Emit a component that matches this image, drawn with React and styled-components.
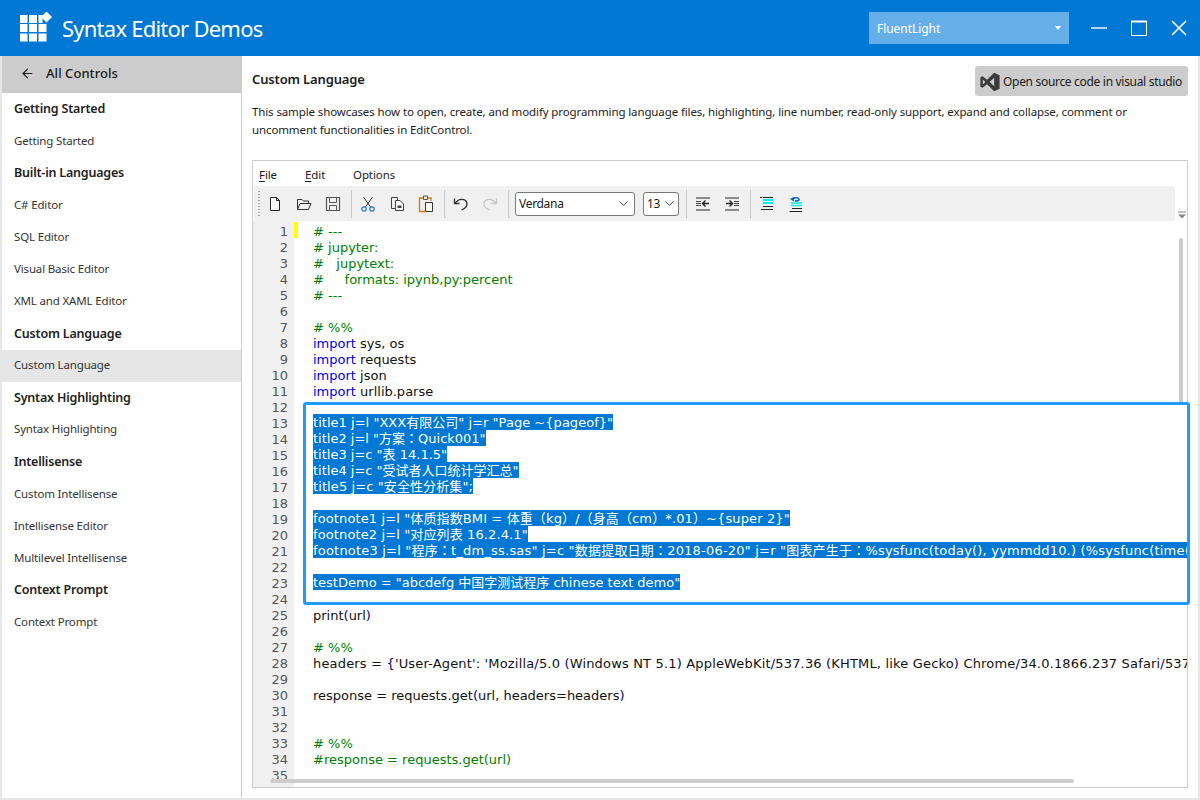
import React from 'react'
import styled, { createGlobalStyle } from 'styled-components'
import { ArrowLeft, ChevronDown } from 'lucide-react'

const UI_FONT = '"Noto Sans", "Noto Sans CJK SC", sans-serif'
const CODE_FONT = '"DejaVu Sans", "Noto Sans CJK JP", sans-serif'

const GlobalStyle = createGlobalStyle`
  html, body { margin: 0; padding: 0; background: #fff; }
  * { box-sizing: border-box; }
`

const Window = styled.div`
  width: 1200px;
  height: 800px;
  display: flex;
  flex-direction: column;
  overflow: hidden;
  font-family: ${UI_FONT};
  color: #1a1a1a;
`

const TitleBar = styled.div`
  height: 56px;
  flex: none;
  background: #0078d4;
  display: flex;
  align-items: center;
  padding-left: 20px;
  color: #fff;
`

const AppTitle = styled.div`
  font-size: 22px;
  margin-left: 8px;
  letter-spacing: -0.76px;
  flex: 1;
`

const ThemeCombo = styled.div`
  width: 200px;
  height: 32px;
  background: #66aee7;
  display: flex;
  align-items: center;
  justify-content: space-between;
  padding: 0 8px;
  font-size: 12px;
  letter-spacing: -0.05px;
  margin-right: 22px;
`

const Caret = styled.div`
  width: 0;
  height: 0;
  border-left: 3.5px solid transparent;
  border-right: 3.5px solid transparent;
  border-top: 4px solid #fff;
`

const WinButton = styled.div`
  width: 16px;
  height: 16px;
  margin-right: 24px;
  display: flex;
  &:last-child { margin-right: 13px; }
`

const Body = styled.div`
  flex: 1;
  min-height: 0;
  display: flex;
  border: 2px solid #e6e6e6;
  border-top: none;
`

const Sidebar = styled.div`
  width: 240px;
  flex: none;
  border-right: 1px solid #ccc;
`

const BackRow = styled.div`
  height: 37px;
  background: #ccc;
  display: flex;
  align-items: center;
  padding: 0 0 3px 18px;
  font-size: 13px;
  font-weight: 500;
  letter-spacing: 0.05px;
  gap: 11px;
`

const NavHeading = styled.div`
  height: 32.1px;
  padding: 0 0 1px 12px;
  display: flex;
  align-items: center;
  font-size: 12.5px;
  font-weight: 600;
  letter-spacing: -0.2px;
  color: #222;
`

const NavItem = styled.div`
  height: 32.1px;
  padding: 0 0 2px 12px;
  display: flex;
  align-items: center;
  font-size: 11.5px;
  letter-spacing: -0.16px;
  color: #333;
  background: ${({ $active }) => ($active ? '#e6e6e6' : 'transparent')};
`

const Main = styled.div`
  flex: 1;
  min-width: 0;
  padding: 10px;
  display: flex;
  flex-direction: column;
`

const Header = styled.div`
  display: flex;
  align-items: center;
  justify-content: space-between;
  height: 30px;
  flex: none;
`

const PageTitle = styled.div`
  font-size: 13px;
  font-weight: 600;
  letter-spacing: -0.15px;
  padding-bottom: 4px;
`

const SourceButton = styled.div`
  width: 213px;
  height: 30px;
  background: #ccc;
  border-radius: 3px;
  display: flex;
  align-items: center;
  gap: 3px;
  padding: 1px 0 0 5px;
  font-size: 12px;
  letter-spacing: -0.31px;
`

const Description = styled.div`
  margin-top: 7px;
  font-size: 11.5px;
  line-height: 18px;
  letter-spacing: -0.115px;
  color: #222;
  width: 900px;
`

const EditorFrame = styled.div`
  position: relative;
  margin-top: 21px;
  flex: 1;
  min-height: 0;
  border: 1px solid #ccc;
  display: flex;
  flex-direction: column;
`

const MenuBar = styled.div`
  height: 25px;
  flex: none;
  display: flex;
  align-items: center;
  padding: 1px 0 0 6px;
  font-size: 11.5px;
  letter-spacing: -0.1px;
`

const MenuItem = styled.div`
  width: ${({ $w }) => $w}px;
  u { text-underline-offset: 2px; }
`

const ToolbarRow = styled.div`
  height: 35px;
  flex: none;
  display: flex;
`

const Toolbar = styled.div`
  width: 922px;
  margin-left: 1px;
  background: #f0f0f0;
  border-radius: 2px;
  display: flex;
  align-items: center;
  padding-left: 4px;
`

const Grip = styled.div`
  width: 2px;
  height: 26px;
  margin-right: 1px;
  background: repeating-linear-gradient(to bottom, #a0a0a0 0 1px, transparent 1px 3px);
`

const ToolButton = styled.div`
  width: 28px;
  height: 24px;
  margin: 1px 1px 0 0;
  display: flex;
  align-items: center;
  justify-content: center;
`

const Separator = styled.div`
  width: 1px;
  height: 28px;
  background: #c8c8c8;
  margin: 0 2.5px 0 ${({ $ml }) => $ml ?? 2.5}px;
`

const Combo = styled.div`
  width: ${({ $w }) => $w}px;
  height: 24px;
  margin-left: ${({ $ml }) => $ml}px;
  background: #fff;
  border: 1px solid #777;
  border-radius: 3px;
  display: flex;
  align-items: center;
  justify-content: space-between;
  padding: 0 3px 0 3px;
  font-size: 12px;
  letter-spacing: -0.3px;
`

const OverflowMark = styled.div`
  width: 11px;
  margin-left: 1px;
  display: flex;
  align-items: flex-end;
  justify-content: center;
  padding-bottom: 2px;
`

const CodeArea = styled.div`
  position: relative;
  flex: 1;
  min-height: 0;
  overflow: hidden;
  display: flex;
`

const Gutter = styled.div`
  width: 41px;
  flex: none;
  background: #f0f0f0;
  padding-top: 1px;
`

const LineNumber = styled.div`
  height: 16px;
  line-height: 20px;
  padding-right: 6px;
  text-align: right;
  font-family: ${CODE_FONT};
  font-size: 13px;
  color: #555;
`

const ChangeColumn = styled.div`
  width: 4px;
  flex: none;
  padding-top: 1px;
  &::before {
    content: '';
    display: block;
    height: 16px;
    background: #ffff00;
  }
`

const CodeLines = styled.div`
  flex: 1;
  min-width: 0;
  padding: 1px 0 0 15px;
  overflow: hidden;
`

const CodeLine = styled.div`
  height: 16px;
  line-height: 20px;
  white-space: pre;
  font-family: ${CODE_FONT};
  font-size: 13px;
  letter-spacing: ${({ $spacing }) => $spacing || 0}px;
  color: #111;
`

const Comment = styled.span`
  color: #008000;
`

const Keyword = styled.span`
  color: #0000ff;
`

const Operator = styled.span`
  color: #000080;
`

const Selected = styled.span`
  display: inline-block;
  vertical-align: top;
  height: 16px;
  line-height: 18px;
  background: #0078d4;
  color: #fff;
`

const VerticalThumb = styled.div`
  position: absolute;
  right: 4px;
  top: 17px;
  width: 4px;
  height: 165px;
  border-radius: 2px;
  background: #ccc;
`

const HorizontalThumb = styled.div`
  position: absolute;
  left: 17px;
  bottom: 4px;
  width: 804px;
  height: 4px;
  border-radius: 2px;
  background: #ccc;
`

const SelectionBox = styled.div`
  position: absolute;
  left: 50px;
  top: 241px;
  width: 887px;
  height: 203px;
  border: 3px solid #1e9bff;
  border-radius: 3px;
  pointer-events: none;
`

const SizeChevron = styled(ChevronDown)`
  margin: 0 -2px 0 -3px;
`

const NAV = [
  ['h', 'Getting Started'],
  ['i', 'Getting Started'],
  ['h', 'Built-in Languages'],
  ['i', 'C# Editor'],
  ['i', 'SQL Editor'],
  ['i', 'Visual Basic Editor'],
  ['i', 'XML and XAML Editor'],
  ['h', 'Custom Language'],
  ['a', 'Custom Language'],
  ['h', 'Syntax Highlighting'],
  ['i', 'Syntax Highlighting'],
  ['h', 'Intellisense'],
  ['i', 'Custom Intellisense'],
  ['i', 'Intellisense Editor'],
  ['i', 'Multilevel Intellisense'],
  ['h', 'Context Prompt'],
  ['i', 'Context Prompt'],
]

const CODE = [
  '# ---',
  '# jupyter:',
  '#   jupytext:',
  '#     formats: ipynb,py:percent',
  '# ---',
  '',
  '# %%',
  'import sys, os',
  'import requests',
  'import json',
  'import urllib.parse',
  '',
  '>title1 j=l "XXX有限公司" j=r "Page ~{pageof}"',
  '>title2 j=l "方案：Quick001"',
  '>title3 j=c "表 14.1.5"',
  '>title4 j=c "受试者人口统计学汇总"',
  '>title5 j=c "安全性分析集";',
  '',
  '>footnote1 j=l "体质指数BMI = 体重（kg）/（身高（cm）*.01）~{super 2}"',
  '>footnote2 j=l "对应列表 16.2.4.1"',
  '>footnote3 j=l "程序：t_dm_ss.sas" j=c "数据提取日期：2018-06-20" j=r "图表产生于：%sysfunc(today(), yymmdd10.) (%sysfunc(time(), time8.))"',
  '',
  '>testDemo = "abcdefg 中国字测试程序 chinese text demo"',
  '',
  'print(url)',
  '',
  '# %%',
  "headers = {'User-Agent': 'Mozilla/5.0 (Windows NT 5.1) AppleWebKit/537.36 (KHTML, like Gecko) Chrome/34.0.1866.237 Safari/537.36'}",
  '',
  'response = requests.get(url, headers=headers)',
  '',
  '',
  '# %%',
  '#response = requests.get(url)',
  '',
]

// verdana runs a bit wider than dejavu on these long lines
const LINE_SPACING = { 12: 0.03, 16: 0.1, 18: 0.12, 19: 0.12, 20: 0.2, 27: 0.17 }

const renderCode = (line) => {
  if (line.startsWith('>')) return <Selected>{line.slice(1)}</Selected>
  if (line.startsWith('#')) return <Comment>{line}</Comment>
  if (line.startsWith('import ')) return <><Keyword>import</Keyword>{line.slice(6)}</>
  return line.split(/([()/{}])/).map((part, i) =>
    i % 2 ? <Operator key={i}>{part}</Operator> : part
  )
}

const Logo = () => (
  <svg width="34" height="32" viewBox="0 0 34 32" fill="#fff">
    <rect x="0" y="3" width="7.5" height="8" />
    <rect x="9" y="3" width="8" height="8" />
    <rect x="18.5" y="3" width="4" height="8" />
    <rect x="0" y="12" width="7.5" height="8" />
    <rect x="9" y="12" width="8" height="8" />
    <rect x="18.5" y="12" width="8" height="8" />
    <rect x="0" y="21.5" width="7.5" height="8" />
    <rect x="9" y="21.5" width="8" height="8" />
    <rect x="18.5" y="21.5" width="8" height="8" />
    <path d="M26.5 -0.5 L32 5 L26.5 10.5 L21 5 Z" />
  </svg>
)

const VsLogo = () => (
  <svg width="20" height="20" viewBox="0 0 24 24" fill="#3a3a3a" fillRule="evenodd">
    <path d="M17 1 L23.5 3.8 V20.2 L17 23 L8.5 14.8 L3 19 L0.5 17.6 V6.4 L3 5 L8.5 9.2 Z M17 7 L11.5 12 L17 17 Z M3.4 9 V15 L6.6 12 Z" />
  </svg>
)

const NewIcon = () => (
  <svg width="16" height="16" viewBox="0 0 16 16" fill="#fff" stroke="#222">
    <path d="M3.5 1.5 H9.5 L12.5 4.5 V14.5 H3.5 Z M9.5 1.5 V4.5 H12.5" />
  </svg>
)

const OpenIcon = () => (
  <svg width="16" height="16" viewBox="0 0 16 16" fill="none" stroke="#333">
    <path d="M1.5 13.5 V3.5 H6 L7.5 5 H12.5 V7" />
    <path d="M1.5 13.5 L4 7.5 H15 L12.5 13.5 Z" fill="#f0f0f0" />
  </svg>
)

const SaveIcon = () => (
  <svg width="16" height="16" viewBox="0 0 16 16" fill="none" stroke="#555">
    <path d="M1.5 1.5 H14.5 V14.5 H1.5 Z" strokeWidth="1.2" />
    <path d="M4.5 1.5 V6.5 H11.5 V1.5 M4.5 14.5 V9.5 H11.5 V14.5" />
  </svg>
)

const CutIcon = () => (
  <svg width="16" height="16" viewBox="0 0 16 16" fill="none">
    <path d="M3.5 1 L10.5 11 M12.5 1 L5.5 11" stroke="#333" />
    <circle cx="4" cy="13" r="2.2" stroke="#2b78c5" strokeWidth="1.2" />
    <circle cx="12" cy="13" r="2.2" stroke="#2b78c5" strokeWidth="1.2" />
  </svg>
)

const CopyIcon = () => (
  <svg width="16" height="16" viewBox="0 0 16 16" fill="#f0f0f0" stroke="#444">
    <path d="M2.5 1.5 H8.5 V12.5 H2.5 Z" />
    <path d="M6.5 4.5 H11 L14.5 8 V14.5 H6.5 Z" fill="#fff" />
    <path d="M8.5 9.5 H12.5 V12 H8.5 Z" fill="#444" stroke="none" />
  </svg>
)

const PasteIcon = () => (
  <svg width="16" height="18" viewBox="0 0 16 18" fill="none">
    <path d="M5 3 H1.5 V16.5 H7" stroke="#d97706" strokeWidth="1.3" />
    <path d="M10 3 H13 V6" stroke="#d97706" strokeWidth="1.3" />
    <path d="M5.5 1 H9.5 V4.5 H5.5 Z" stroke="#555" />
    <path d="M7.5 7.5 H14.5 V16.5 H7.5 Z" stroke="#333" fill="#fff" />
  </svg>
)

const UndoIcon = ({ color = '#333', flip }) => (
  <svg width="16" height="16" viewBox="0 0 16 16" fill="none" stroke={color} strokeWidth="1.3">
    <g transform={flip ? 'translate(16 0) scale(-1 1)' : undefined}>
      <path d="M1.5 2.5 V7.5 H6.5" />
      <path d="M1.5 7.5 L5 4.5 C8 2.2 14 3.5 14 8 C14 10.5 12 12.5 8.5 14" />
    </g>
  </svg>
)

const OutdentIcon = ({ flip }) => (
  <svg width="14" height="14" viewBox="0 0 14 14" fill="none">
    <path d="M0 1 H14 M0 13 H14" stroke="#8c8c8c" strokeWidth="2" />
    {flip ? (
      <>
        <path d="M9 4.5 H14 M9 6.5 H14 M9 8.5 H14" stroke="#444" />
        <path d="M1 6.5 H7 M4.5 3.5 L7.5 6.5 L4.5 9.5" stroke="#222" strokeWidth="1.4" />
      </>
    ) : (
      <>
        <path d="M0 4.5 H5 M0 6.5 H5 M0 8.5 H5" stroke="#444" />
        <path d="M13 6.5 H7 M9.5 3.5 L6.5 6.5 L9.5 9.5" stroke="#222" strokeWidth="1.4" />
      </>
    )}
  </svg>
)

const CommentIcon = () => (
  <svg width="14" height="14" viewBox="0 0 14 14" fill="none">
    <path d="M0 0.5 H2 M3 0.5 H13" stroke="#222" />
    <path d="M3 3 H13 M3 6 H13" stroke="#00f0f0" strokeWidth="2" />
    <path d="M3 9.5 H13 M1 12.5 H13" stroke="#222" />
  </svg>
)

const UncommentIcon = () => (
  <svg width="14" height="16" viewBox="0 0 14 16" fill="none">
    <path d="M3.5 4 C3.5 1 10 1 10 3.5 C10 5 8 5 6 5" stroke="#0a5fc4" strokeWidth="1.6" />
    <path d="M1 3 L5 1 V5.5 Z" fill="#0a5fc4" />
    <path d="M2 7 H13 M2 9.5 H13" stroke="#00f0f0" strokeWidth="1.5" />
    <path d="M3 12.5 H13 M0.5 15.5 H13" stroke="#222" />
  </svg>
)

const App = () => (
  <Window>
    <GlobalStyle />
    <TitleBar>
      <Logo />
      <AppTitle>Syntax Editor Demos</AppTitle>
      <ThemeCombo>
        FluentLight
        <Caret />
      </ThemeCombo>
      <WinButton>
        <svg width="16" height="16" viewBox="0 0 16 16"><path d="M0 8 H16" stroke="#fff" strokeWidth="1.4" /></svg>
      </WinButton>
      <WinButton>
        <svg width="16" height="16" viewBox="0 0 16 16" fill="none"><path d="M0.5 1.5 H15.5 V15.5 H0.5 Z" stroke="#fff" /><path d="M0 1.5 H16" stroke="#fff" strokeWidth="2" /></svg>
      </WinButton>
      <WinButton>
        <svg width="16" height="16" viewBox="0 0 16 16"><path d="M1 1 L15 15 M15 1 L1 15" stroke="#fff" strokeWidth="1.6" /></svg>
      </WinButton>
    </TitleBar>
    <Body>
      <Sidebar>
        <BackRow>
          <ArrowLeft size={15} strokeWidth={1.8} />
          All Controls
        </BackRow>
        {NAV.map(([kind, label], i) =>
          kind === 'h'
            ? <NavHeading key={i}>{label}</NavHeading>
            : <NavItem key={i} $active={kind === 'a'}>{label}</NavItem>
        )}
      </Sidebar>
      <Main>
        <Header>
          <PageTitle>Custom Language</PageTitle>
          <SourceButton>
            <VsLogo />
            Open source code in visual studio
          </SourceButton>
        </Header>
        <Description>
          This sample showcases how to open, create, and modify programming language files, highlighting, line number, read-only support, expand and collapse, comment or uncomment functionalities in EditControl.
        </Description>
        <EditorFrame>
          <MenuBar>
            <MenuItem $w={46}><u>F</u>ile</MenuItem>
            <MenuItem $w={48}><u>E</u>dit</MenuItem>
            <MenuItem $w={60}>Options</MenuItem>
          </MenuBar>
          <ToolbarRow>
            <Toolbar>
              <Grip />
              <ToolButton><NewIcon /></ToolButton>
              <ToolButton><OpenIcon /></ToolButton>
              <ToolButton><SaveIcon /></ToolButton>
              <Separator />
              <ToolButton><CutIcon /></ToolButton>
              <ToolButton><CopyIcon /></ToolButton>
              <ToolButton><PasteIcon /></ToolButton>
              <Separator />
              <ToolButton><UndoIcon /></ToolButton>
              <ToolButton><UndoIcon color="#c4c4c4" flip /></ToolButton>
              <Separator />
              <Combo $w={120} $ml={4}>
                Verdana
                <ChevronDown size={15} strokeWidth={1.5} color="#333" />
              </Combo>
              <Combo $w={36} $ml={8}>
                13
                <SizeChevron size={15} strokeWidth={1.5} color="#333" />
              </Combo>
              <Separator $ml={6.5} />
              <ToolButton><OutdentIcon /></ToolButton>
              <ToolButton><OutdentIcon flip /></ToolButton>
              <Separator />
              <ToolButton><CommentIcon /></ToolButton>
              <ToolButton><UncommentIcon /></ToolButton>
            </Toolbar>
            <OverflowMark>
              <svg width="8" height="8" viewBox="0 0 8 8"><path d="M0 1 H8" stroke="#888" /><path d="M0 3.5 H8 L4 7.5 Z" fill="#888" /></svg>
            </OverflowMark>
          </ToolbarRow>
          <CodeArea>
            <Gutter>
              {CODE.map((_, i) => <LineNumber key={i}>{i + 1}</LineNumber>)}
            </Gutter>
            <ChangeColumn />
            <CodeLines>
              {CODE.map((line, i) => <CodeLine key={i} $spacing={LINE_SPACING[i]}>{renderCode(line)}</CodeLine>)}
            </CodeLines>
            <VerticalThumb />
            <HorizontalThumb />
          </CodeArea>
          <SelectionBox />
        </EditorFrame>
      </Main>
    </Body>
  </Window>
)

export default App
